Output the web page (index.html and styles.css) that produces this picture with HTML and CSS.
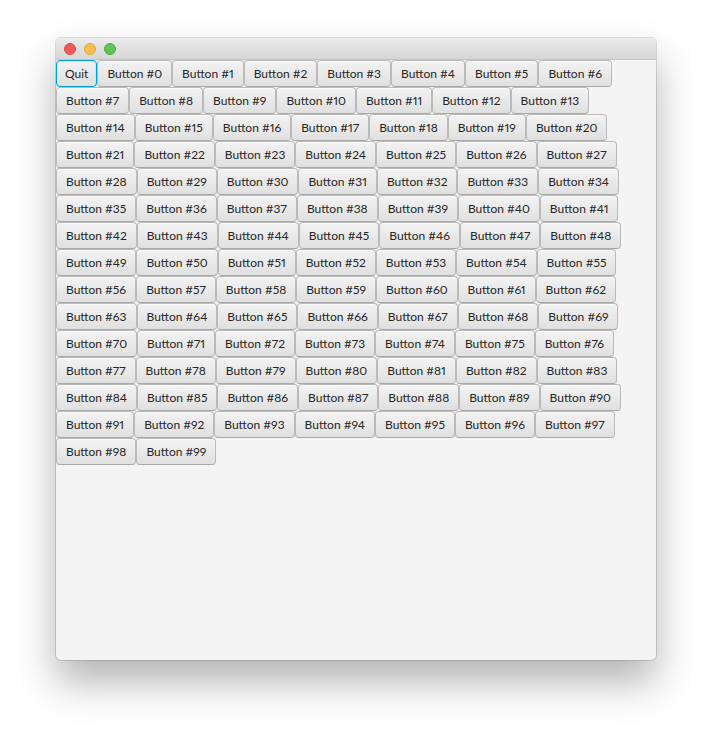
FILE: index.html
```html
<!DOCTYPE html>
<html>
<head>
<meta charset="utf-8">
<link rel="stylesheet" href="styles.css">
</head>
<body>
<div class="window">
  <div class="titlebar">
    <span class="light red"></span>
    <span class="light yellow"></span>
    <span class="light green"></span>
  </div>
  <div class="content" id="content">
    <button class="btn focused">Quit</button>
  </div>
</div>
<script src="script.js"></script>
</body>
</html>
```
FILE: script.js
```js
var c = document.getElementById('content');
for (var i = 0; i < 100; i++) {
  var b = document.createElement('button');
  b.className = 'btn';
  b.textContent = 'Button #' + i;
  c.appendChild(b);
}
```
FILE: styles.css
```css
html, body {
  margin: 0;
  padding: 0;
  background: #ffffff;
}
body {
  padding: 38px 0 0 56px;
  height: 734px;
  box-sizing: border-box;
}
.window {
  width: 600px;
  height: 622px;
  background: #f4f4f4;
  border-radius: 5px;
  box-shadow: 0 0 0 1px rgba(0,0,0,0.12), 0 22px 40px rgba(0,0,0,0.3);
  overflow: hidden;
  display: flex;
  flex-direction: column;
}
.titlebar {
  height: 22px;
  flex: none;
  background: linear-gradient(#ececec, #d6d6d6);
  border-bottom: 1px solid #c4c4c4;
  box-sizing: border-box;
  display: flex;
  align-items: center;
  padding-left: 8px;
  gap: 8px;
}
.light {
  width: 12px;
  height: 12px;
  border-radius: 50%;
  box-sizing: border-box;
}
.red { background: #ee5b55; border: 1px solid #dc4b45; }
.yellow { background: #f6be4f; border: 1px solid #e0a63a; }
.green { background: #5fc553; border: 1px solid #4eaf42; }
.content {
  flex: 1;
  display: flex;
  flex-wrap: wrap;
  align-content: flex-start;
  align-items: flex-start;
}
.btn {
  font-family: Lato, "Open Sans", sans-serif;
  font-size: 12px;
  font-variant-numeric: proportional-nums;
  color: #262626;
  height: 27px;
  padding: 0 9px;
  margin: 0;
  border: 1px solid #bababa;
  border-bottom-color: #a9a9a9;
  border-radius: 4px;
  background: linear-gradient(#f3f3f3, #e0e0e0);
  box-shadow: inset 0 1px 0 #fafafa;
  box-sizing: border-box;
  white-space: nowrap;
  line-height: 24px;
}
.btn.focused {
  padding: 0 8px;
  border: 1px solid #039ed3;
  box-shadow: inset 0 0 0 1px #c6e9f6;
}
```
